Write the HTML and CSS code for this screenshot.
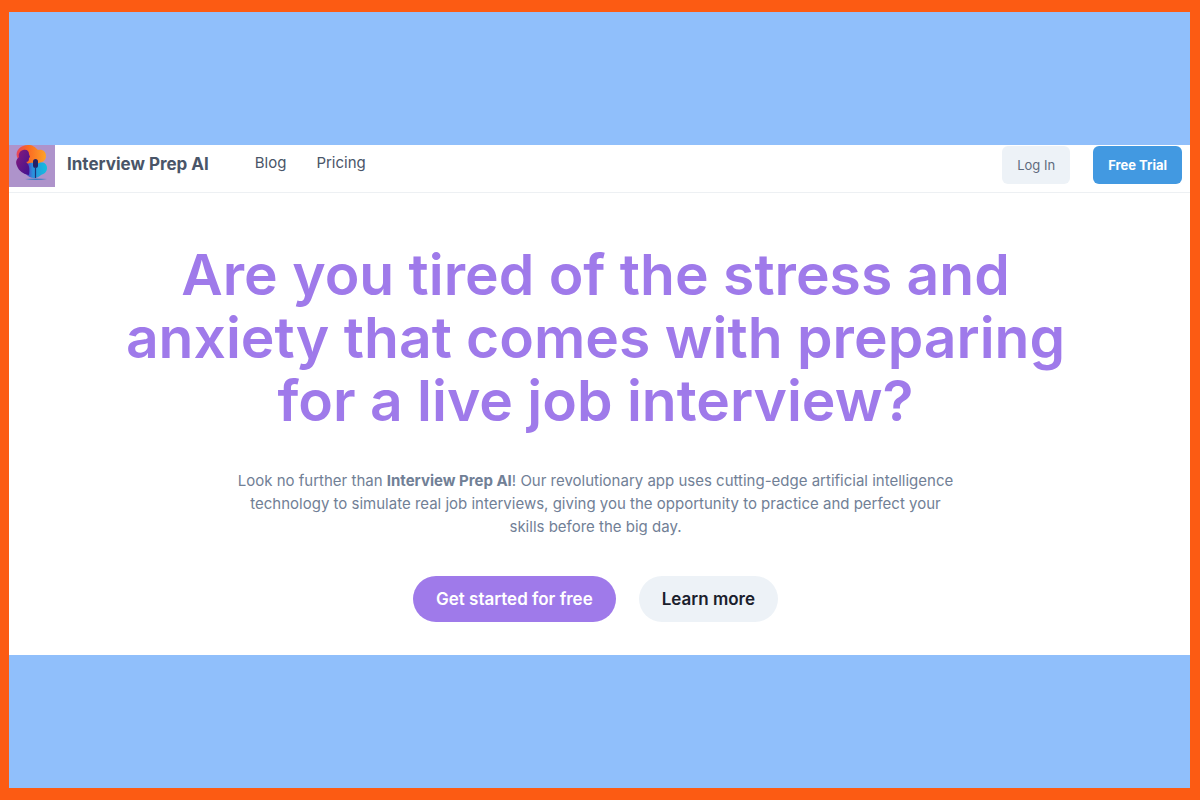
FILE: index.html
```html
<!DOCTYPE html>
<html lang="en">
<head>
    <meta charset="UTF-8">
    <meta name="viewport" content="width=device-width, initial-scale=1.0">
    <title>Interview Prep AI</title>
    <link rel="stylesheet" href="styles.css">
</head>
<body>
    <div class="frame">
        <div class="page">
            <header class="navbar">
                <a href="#" class="brand">
                    <svg class="logo" viewBox="0 0 46 42" aria-hidden="true">
                        <defs>
                            <linearGradient id="warm" x1="0" y1="0" x2="1" y2="0">
                                <stop offset="0" stop-color="#e8455a"/>
                                <stop offset="0.4" stop-color="#fb6a22"/>
                                <stop offset="1" stop-color="#fda329"/>
                            </linearGradient>
                            <linearGradient id="cool" x1="0" y1="0" x2="1" y2="0">
                                <stop offset="0" stop-color="#5a24b8"/>
                                <stop offset="0.35" stop-color="#2c8fdc"/>
                                <stop offset="1" stop-color="#12bfe0"/>
                            </linearGradient>
                            <linearGradient id="person" x1="0" y1="0" x2="1" y2="1">
                                <stop offset="0" stop-color="#8a1a78"/>
                                <stop offset="1" stop-color="#3d1293"/>
                            </linearGradient>
                        </defs>
                        <rect width="46" height="42" fill="#ae93cb"/>
                        <path d="M8 12C6 5 12 0 19 0c5 0 7 2 10 5 5-1 8 2 8 6s-3 6-6 7l-4 6-12 1z" fill="url(#warm)"/>
                        <path d="M16 21c3-4 8-4 12-2 5-3 10-1 10 4 0 4-3 6-6 7-4 4-11 4-15-1z" fill="url(#cool)"/>
                        <path d="M14 5c4-1 6 1 6 4l1 3-1 1c0 3-1 4-3 4 3 2 4 6 3 13-6-1-10-4-12-9-2-5 0-7 2-9-1-3 1-6 4-7z" fill="url(#person)"/>
                        <rect x="24" y="14" width="5" height="9" rx="2.5" fill="#262064"/>
                        <path d="M26.500 22v11" stroke="#1d347c" stroke-width="1.200"/>
                        <path d="M16 34q10-1 22 0-11 2-22 0z" fill="#347bc5"/>
                    </svg>
                    <span>Interview Prep AI</span>
                </a>
                <nav class="nav-links">
                    <a href="#">Blog</a>
                    <a href="#">Pricing</a>
                </nav>
                <div class="nav-actions">
                    <button class="btn">Log In</button>
                    <button class="btn btn-blue">Free Trial</button>
                </div>
            </header>

            <main class="hero">
                <h1>Are you tired of the stress and anxiety that comes with preparing for a live job interview?</h1>
                <p>Look no further than <strong>Interview Prep AI</strong>! Our revolutionary app uses cutting-edge artificial intelligence technology to simulate real job interviews, giving you the opportunity to practice and perfect your skills before the big day.</p>
                <div class="hero-buttons">
                    <button class="pill pill-purple">Get started for free</button>
                    <button class="pill">Learn more</button>
                </div>
            </main>
        </div>
    </div>
</body>
</html>
```
FILE: styles.css
```css
* {
    margin: 0;
    padding: 0;
    box-sizing: border-box;
}

body {
    font-family: Inter, sans-serif;
    color: #4a5568;
}

a {
    color: inherit;
    text-decoration: none;
}

button {
    border: none;
    font-family: inherit;
    cursor: pointer;
}

.frame {
    min-height: 100vh;
    display: flex;
    flex-direction: column;
    justify-content: center;
    background-color: #90bffb;
    border: solid #fc5b13;
    border-width: 12px 10px 12px 9px;
}

.page {
    background-color: white;
}

.navbar {
    display: flex;
    align-items: flex-start;
    height: 48px;
    padding-right: 8px;
    border-bottom: 1px solid #edf0f3;
}

.brand {
    display: flex;
    gap: 12px;
    font-size: 17px;
    font-weight: 700;
    line-height: 38px;
}

.logo {
    width: 46px;
    height: 42px;
}

.nav-links {
    display: flex;
    gap: 30px;
    margin-left: 46px;
    font-size: 15px;
    line-height: 36px;
}

.nav-actions {
    display: flex;
    gap: 23px;
    margin-left: auto;
    padding-top: 1px;
}

.btn {
    height: 38px;
    padding: 0 15px;
    border-radius: 6px;
    background-color: #edf2f7;
    color: #5f6b7d;
    font-size: 13px;
}

.btn-blue {
    background-color: #4299e1;
    color: white;
    font-weight: 700;
}

.hero {
    display: flex;
    flex-direction: column;
    align-items: center;
    padding: 50px 8px 33px 0;
    text-align: center;
}

.hero h1 {
    max-width: 980px;
    color: #9f7aea;
    font-size: 57px;
    font-weight: 600;
    line-height: 63px;
}

.hero p {
    max-width: 720px;
    margin-top: 37px;
    color: #718096;
    font-size: 15px;
    line-height: 23px;
}

.hero-buttons {
    display: flex;
    gap: 23px;
    margin-top: 38px;
}

.pill {
    height: 46px;
    padding: 0 23px;
    border-radius: 23px;
    background-color: #edf2f7;
    color: #1a202c;
    font-size: 17px;
    font-weight: 600;
}

.pill-purple {
    background-color: #9f7aea;
    color: white;
}
```
